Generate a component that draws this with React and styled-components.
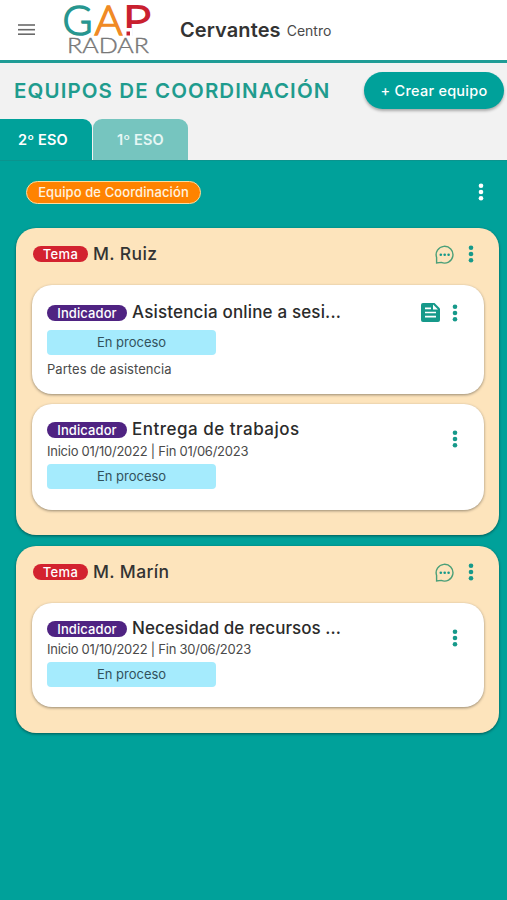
import React from 'react';
import styled, { createGlobalStyle } from 'styled-components';

const teal = '#00a19a';

const GlobalStyle = createGlobalStyle`
  body {
    margin: 0;
    background: ${teal};
    font-family: Inter, 'Open Sans', sans-serif;
    color: #333;
  }

  * {
    box-sizing: border-box;
  }
`

const Header = styled.header`
  display: flex;
  align-items: center;
  height: 63px;
  background: #fff;
  border-bottom: 3px solid #1f9c96;
`

const MenuIcon = styled.svg`
  display: block;
  width: 17px;
  height: 12px;
  margin: 0 28px 0 18px;
  fill: #6a6a6a;
`

const LogoImage = styled.svg`
  display: block;
  width: 91px;
  height: 60px;
  overflow: visible;
  font-family: Lato, sans-serif;
  font-weight: 300;
`

const CenterName = styled.h1`
  margin: 0 6px 0 26px;
  font-size: 20px;
  font-weight: 600;
  line-height: 60px;
  letter-spacing: 0.1px;
`

const CenterType = styled.span`
  padding-top: 2px;
  font-size: 14px;
  line-height: 58px;
  color: #4a4a4a;
`

const TopBar = styled.div`
  display: flex;
  justify-content: space-between;
  align-items: flex-start;
  height: 56px;
  padding: 9px 3px 0 14px;
  background: #f2f2f2;
`

const PageTitle = styled.h2`
  margin: 0;
  font-size: 20.5px;
  font-weight: 600;
  line-height: 37px;
  letter-spacing: 1.1px;
  white-space: nowrap;
  color: #1f9c8e;
`

const CreateButton = styled.button`
  width: 140px;
  height: 37px;
  padding: 0;
  border: 0;
  border-radius: 19px;
  background: ${teal};
  box-shadow: 0 2px 3px rgba(0, 0, 0, 0.3);
  color: #fff;
  font-family: inherit;
  font-size: 14.5px;
  font-weight: 500;
  letter-spacing: 0.25px;
`

const Tabs = styled.div`
  display: flex;
  gap: 1px;
  height: 41px;
  background: #f2f2f2;
`

const Tab = styled.div`
  width: ${props => props.$active ? '92px' : '95px'};
  padding-left: ${props => props.$active ? '18px' : '24px'};
  border-radius: ${props => props.$active ? '0 9px 0 0' : '9px 9px 0 0'};
  background: ${props => props.$active ? teal : '#76c5bf'};
  color: ${props => props.$active ? '#fff' : '#e6f7f5'};
  font-size: 14.5px;
  font-weight: 600;
  line-height: 42px;
  letter-spacing: 0.15px;
`

const Panel = styled.main`
  padding: 19px 8px 0 16px;
  border-top: 1px solid #0b948e;
`

const TeamRow = styled.div`
  display: flex;
  justify-content: space-between;
  align-items: center;
  height: 24px;
  padding: 0 15px 0 10px;
  margin-bottom: 24px;
`

const TeamBadge = styled.span`
  width: 175px;
  height: 23px;
  border: 1.5px solid #fbdc9f;
  border-radius: 12px;
  background: #ff8300;
  color: #fff3e0;
  font-size: 13px;
  font-weight: 500;
  line-height: 20px;
  letter-spacing: 0.1px;
  text-align: center;
`

const Theme = styled.section`
  height: ${props => props.$height};
  margin-bottom: 11px;
  padding: 14px 15px 0 16px;
  border-radius: 20px;
  background: #fde4bc;
  box-shadow: 0 1px 3px rgba(0, 0, 0, 0.45);
`

const ThemeHead = styled.div`
  display: flex;
  align-items: center;
  height: 24px;
  margin-bottom: 19px;
`

const Badge = styled.span`
  flex: none;
  width: ${props => props.$width};
  height: 16px;
  margin-right: 5px;
  border-radius: 8px;
  background: ${props => props.$color};
  color: #fff;
  font-size: 13px;
  font-weight: 500;
  line-height: 16px;
  letter-spacing: ${props => props.$spacing || '0.1px'};
  text-align: center;
`

const ThemeBadge = styled(Badge)`
  margin-left: 1px;
`

const ThemeName = styled.h3`
  flex: 1;
  margin: 0;
  font-size: 17.5px;
  font-weight: 500;
  letter-spacing: 0.35px;
  line-height: 22px;
`

const Actions = styled.div`
  display: flex;
  align-items: center;
  gap: 14px;
  margin-right: 10px;
`

const CardActions = styled(Actions)`
  gap: 12px;
  margin-right: 0;
  padding-top: ${props => props.$top};
`

const Icon = styled.svg`
  display: block;
  flex: none;
  fill: ${props => props.$color || '#16998a'};
`

const Indicator = styled.article`
  display: flex;
  justify-content: space-between;
  align-items: flex-start;
  height: ${props => props.$height};
  margin-bottom: 10px;
  padding: ${props => props.$top} 26px 0 15px;
  border-radius: 20px;
  background: #fff;
  box-shadow: 0 1px 3px rgba(0, 0, 0, 0.4);
`

const IndicatorHead = styled.div`
  display: flex;
  align-items: center;
  height: 24px;

  ${Badge} {
    margin-top: 1px;
  }
`

const IndicatorName = styled.h4`
  margin: 0;
  font-size: 17px;
  font-weight: 500;
  line-height: 24px;
  letter-spacing: ${props => props.$spacing};
  white-space: nowrap;
  color: #2b2b2b;
`

const Dates = styled.div`
  height: 21px;
  margin-top: ${props => props.$top};
  font-size: 13px;
  line-height: 17px;
  letter-spacing: -0.25px;
  color: #4a4a4a;
`

const Status = styled.div`
  width: 169px;
  height: 25px;
  margin-top: ${props => props.$top};
  border-radius: 4px;
  background: #a5ebfd;
  font-size: 13px;
  line-height: 24px;
  text-align: center;
  color: #32525c;
`

const Note = styled.div`
  margin-top: 5px;
  font-size: 13px;
  line-height: 18px;
  letter-spacing: 0.05px;
  color: #4a4a4a;
`

function Logo() {
  return (
    <LogoImage viewBox="0 0 91 60">
      <g fontSize="42" strokeWidth="1.5">
        <text x="-0.5" y="35" textLength="30" lengthAdjust="spacingAndGlyphs" fill="#27968f" stroke="#27968f">G</text>
        <text x="31.5" y="35" textLength="28" lengthAdjust="spacingAndGlyphs" fill="#f08a24" stroke="#f08a24">A</text>
        <text x="60" y="35" textLength="28" lengthAdjust="spacingAndGlyphs" fill="#c9202f" stroke="#c9202f" strokeWidth="2">P</text>
      </g>
      <rect x="60" y="28" width="9" height="9" fill="#fff" />
      <rect x="63.5" y="31.5" width="3.5" height="4" fill="#c9202f" />
      <text x="4" y="53" fontSize="21" textLength="82" lengthAdjust="spacingAndGlyphs" fill="#777" stroke="#777" strokeWidth="0.4">RADAR</text>
    </LogoImage>
  )
}

function Dots({ color }) {
  return (
    <Icon $color={color} width="6" height="18" viewBox="0 0 6 18">
      <circle cx="3" cy="2.7" r="2.3" />
      <circle cx="3" cy="9" r="2.3" />
      <circle cx="3" cy="15.3" r="2.3" />
    </Icon>
  )
}

function Chat() {
  return (
    <Icon width="19" height="19" viewBox="0 0 19 19">
      <path d="M1.6 18V12.4A8.4 8.4 0 1 1 6.2 17.4Z" fill="none" stroke="#4a9f78" strokeWidth="1.4" />
      <circle cx="5.8" cy="9.7" r="1.3" />
      <circle cx="9.7" cy="9.7" r="1.3" />
      <circle cx="13.6" cy="9.7" r="1.3" />
    </Icon>
  )
}

function Doc() {
  return (
    <Icon width="19" height="19" viewBox="0 0 19 19">
      <path d="M2 0h11.5L19 5.5V17a2 2 0 0 1-2 2H2a2 2 0 0 1-2-2V2a2 2 0 0 1 2-2Z" />
      <path d="M4 5.3h6M4 9.5h11M4 13.7h11" fill="none" stroke="#fff" strokeWidth="1.7" />
      <path d="M12 1.5v5h5Z" fill="#fff" />
    </Icon>
  )
}

function IndicatorCard({ item }) {
  return (
    <Indicator $height={item.height} $top={item.dates ? '13px' : '15px'}>
      <div>
        <IndicatorHead>
          <Badge $width="80px" $color="#4f2382">Indicador</Badge>
          <IndicatorName $spacing={item.spacing}>{item.name}</IndicatorName>
        </IndicatorHead>
        {item.dates && <Dates $top={item.gap}>{item.dates}</Dates>}
        <Status $top={item.dates ? 0 : '6px'}>En proceso</Status>
        {item.note && <Note>{item.note}</Note>}
      </div>
      <CardActions $top={item.dates ? '13px' : '3px'}>
        {item.note && <Doc />}
        <Dots />
      </CardActions>
    </Indicator>
  )
}

const themes = [
  {
    name: 'M. Ruiz',
    height: '307px',
    indicators: [
      { name: 'Asistencia online a sesi...', spacing: '0.16px', height: '109px', note: 'Partes de asistencia' },
      { name: 'Entrega de trabajos', spacing: '0.5px', height: '106px', gap: '2px', dates: 'Inicio 01/10/2022 | Fin 01/06/2023' },
    ],
  },
  {
    name: 'M. Marín',
    height: '187px',
    indicators: [
      { name: 'Necesidad de recursos ...', spacing: '0.05px', height: '104px', gap: '1px', dates: 'Inicio 01/10/2022 | Fin 30/06/2023' },
    ],
  },
]

function App() {
  return (
    <>
      <GlobalStyle />
      <Header>
        <MenuIcon viewBox="0 0 17 12">
          <rect y="0.2" width="17" height="1.6" />
          <rect y="4.9" width="17" height="1.6" />
          <rect y="9.4" width="17" height="1.6" />
        </MenuIcon>
        <Logo />
        <CenterName>Cervantes</CenterName>
        <CenterType>Centro</CenterType>
      </Header>
      <TopBar>
        <PageTitle>EQUIPOS DE COORDINACIÓN</PageTitle>
        <CreateButton>+ Crear equipo</CreateButton>
      </TopBar>
      <Tabs>
        <Tab $active>2º ESO</Tab>
        <Tab>1º ESO</Tab>
      </Tabs>
      <Panel>
        <TeamRow>
          <TeamBadge>Equipo de Coordinación</TeamBadge>
          <Dots color="#fff" />
        </TeamRow>
        {themes.map(theme => (
          <Theme key={theme.name} $height={theme.height}>
            <ThemeHead>
              <ThemeBadge $width="55px" $color="#d3222f" $spacing="0.4px">Tema</ThemeBadge>
              <ThemeName>{theme.name}</ThemeName>
              <Actions><Chat /><Dots /></Actions>
            </ThemeHead>
            {theme.indicators.map(item => <IndicatorCard key={item.name} item={item} />)}
          </Theme>
        ))}
      </Panel>
    </>
  )
}

export default App;
